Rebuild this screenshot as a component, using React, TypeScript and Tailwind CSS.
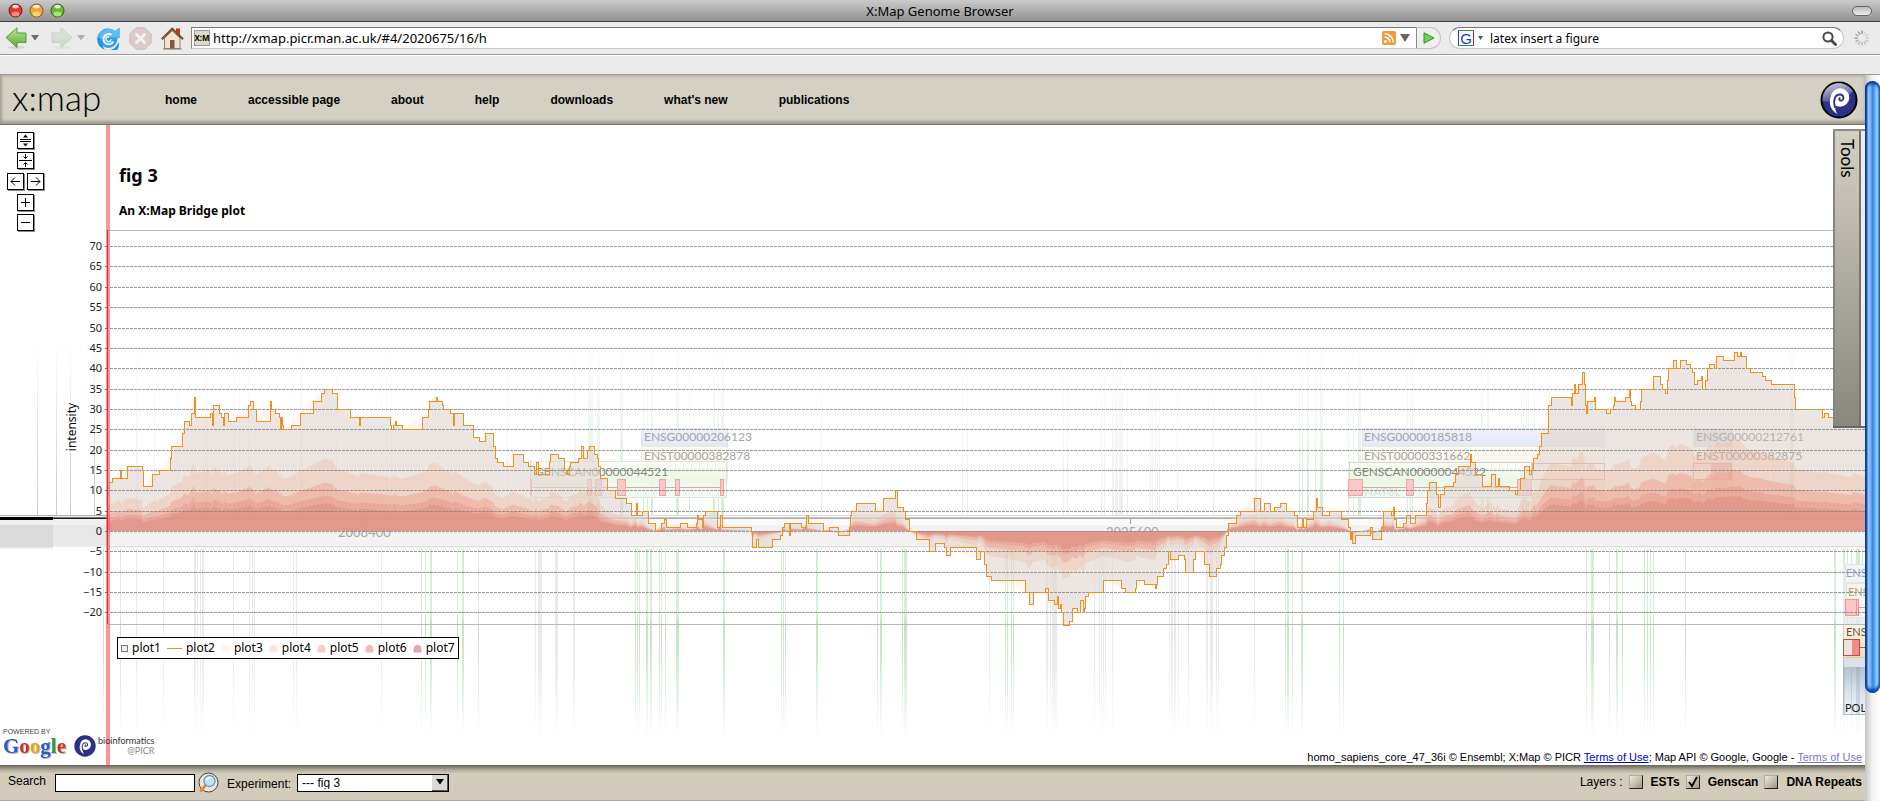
import React from "react";

/* ---------- plot data ---------- */

const ZERO = 531;
const UNIT = 4.07;
const yOf = (v: number) => Math.round((ZERO - v * UNIT) * 10) / 10;
const rowOf = (v: number) => Math.round(ZERO - v * UNIT) + 0.5;

const raw = `108:12,112:13,120:15,121:13,127:16,142:15,143:11,152:14,159:15,170:18,171:21,182:24,184:27,189:26,191:29,194:33,195:28,210:29,212:26,213:31,219:29,221:28,223:26,224:29,228:27,236:28,248:31,250:32,253:30,256:27,270:32,271:30,275:29,279:28,280:25,281:28,282:26,283:25,291:26,300:29,313:32,321:34,324:35,332:34,337:30,350:28,359:26,360:28,390:26,391:25,393:26,395:27,396:26,402:25,422:28,428:30,429:32,436:33,437:32,442:31,443:30,450:29,453:26,454:29,463:26,473:23,479:22,485:24,493:21,495:18,497:17,503:16,513:19,523:17,528:16,534:14,536:17,538:14,549:17,550:19,558:18,564:15,566:14,569:16,570:17,578:18,581:21,583:18,587:20,589:21,594:19,597:18,598:16,600:13,607:10,615:8,626:7,631:4,636:7,637:4,642:5,648:2,655:0,661:2,664:3,666:1,680:2,687:1,696:2,697:4,698:3,702:1,703:4,705:5,717:1,720:4,722:1,751:0,752:-4,756:-2,758:-4,772:-2,780:-1,782:1,784:2,789:-1,790:2,801:1,806:4,808:2,823:0,829:1,838:-1,849:1,850:4,851:5,856:7,875:5,883:8,895:10,897:6,903:5,905:3,909:0,916:-2,929:-5,935:-3,944:-4,946:-6,950:-4,976:-7,980:-5,984:-8,986:-11,991:-12,1025:-15,1029:-18,1033:-15,1045:-14,1048:-17,1054:-18,1057:-16,1058:-19,1060:-18,1061:-20,1063:-23,1069:-22,1072:-19,1077:-20,1080:-17,1083:-20,1084:-19,1085:-16,1088:-15,1103:-12,1121:-14,1125:-15,1135:-14,1136:-12,1144:-13,1155:-14,1156:-13,1157:-11,1163:-9,1166:-8,1168:-5,1170:-7,1178:-6,1184:-7,1185:-10,1193:-7,1195:-5,1204:-8,1209:-11,1216:-9,1220:-8,1221:-6,1224:-4,1226:-1,1228:2,1236:4,1240:5,1254:8,1260:5,1264:7,1270:5,1274:6,1280:7,1286:5,1294:4,1297:1,1302:3,1303:1,1306:3,1313:5,1316:8,1317:6,1322:4,1329:5,1341:3,1348:1,1350:-2,1351:0,1352:-3,1355:-1,1370:1,1372:-2,1381:1,1383:5,1391:4,1393:6,1394:3,1396:1,1403:2,1406:4,1410:2,1415:4,1426:7,1427:10,1429:12,1436:9,1438:6,1440:9,1444:11,1453:12,1455:14,1458:16,1470:19,1471:17,1475:14,1482:11,1491:14,1495:11,1498:13,1499:11,1509:10,1515:9,1517:10,1520:13,1524:16,1529:14,1531:15,1533:18,1537:19,1539:21,1541:24,1548:31,1551:33,1571:31,1572:34,1574:36,1575:34,1578:36,1582:39,1584:36,1585:31,1586:29,1587:32,1594:33,1595:30,1606:29,1610:30,1613:31,1614:33,1615:32,1625:33,1629:35,1630:32,1631:31,1635:30,1640:32,1641:35,1653:38,1660:36,1662:35,1665:34,1667:37,1668:40,1673:42,1676:40,1680:42,1686:41,1690:40,1692:39,1694:36,1697:37,1701:38,1702:35,1705:37,1707:40,1709:41,1714:40,1716:43,1723:42,1734:44,1737:43,1740:44,1741:43,1746:40,1750:39,1762:38,1765:37,1771:36,1794:33,1795:30,1822:28,1824:29,1828:28,1852:26,1853:28,1865:26`;

const steps = raw.split(",").map((p) => p.split(":").map(Number) as [number, number]);

const stepLine = steps
  .map(([x, v], i) => (i === 0 ? `M${x + 0.5} ${rowOf(v)}` : `H${x + 0.5}V${rowOf(v)}`))
  .join("");
const stepArea = `${stepLine}V${ZERO}H108Z`;
const smoothArea = (k: number) =>
  `M108 ${ZERO}` + steps.map(([x, v]) => `L${x} ${yOf(v * k)}`).join("") + `V${ZERO}Z`;

const areas = [
  { k: 1, fill: "rgb(255 215 200 / 0.25)" },
  { k: 0.51, fill: "rgb(235 180 150 / 0.32)" },
  { k: 0.34, fill: "rgb(242 155 140 / 0.45)" },
  { k: 0.25, fill: "rgb(228 145 128 / 0.4)" },
  { k: 0.195, fill: "rgb(214 130 120 / 0.4)" },
];

const ticks = Array.from({ length: 19 }, (_, i) => 70 - i * 5);

/* [x, width] of the probe stripes */
type Stripe = [number, number];
const greenLow: Stripe[] = [[103,1],[120,1],[421,1],[425,1],[430,2],[457,1],[462,2],[478,1],[635,1],[637,1],[639,1],[646,2],[650,2],[659,1],[661,1],[665,1],[676,3],[723,2],[781,1],[783,1],[785,1],[816,2],[877,1],[880,2],[902,1],[904,3],[1005,1],[1007,1],[1011,1],[1013,1],[1285,1],[1287,2],[1292,1],[1301,2],[1339,1],[1343,1],[1586,1],[1591,3],[1609,1],[1616,2],[1622,1],[1644,1],[1647,1],[1650,1],[1653,1],[1685,1],[1834,2],[1843,2],[1847,1],[1851,1],[1856,4],[1862,1]];
const grayLow: Stripe[] = [[136,1],[163,1],[194,2],[197,1],[200,1],[202,2],[233,1],[249,1],[252,1],[254,1],[293,1],[296,1],[381,1],[535,1],[538,4],[555,3],[573,2],[989,1],[1046,2],[1050,1],[1052,5],[1094,1],[1099,1],[1101,1],[1103,1],[1105,1],[1112,1],[1169,1],[1171,2],[1174,2],[1178,1],[1188,1],[1206,2],[1210,3],[1216,1],[1218,1],[1254,1]];
const greenHigh: Stripe[] = [[588,5],[597,3],[620,3],[643,1],[647,1],[651,2],[676,3],[689,1],[713,2],[718,1],[721,3],[1299,1],[1302,1],[1307,2],[1315,1],[1320,3],[1348,1],[1353,1],[1358,3],[1407,1],[1410,1],[1412,1],[1481,2],[1487,2],[1521,1],[1523,1],[1526,1],[1528,1],[1534,1],[1773,1],[1790,4]];
const grayHigh: Stripe[] = [[136,2],[154,1],[177,1],[204,2],[207,1],[233,2],[239,1],[248,2],[254,1],[293,1],[300,3],[336,1],[381,1],[386,1],[391,1],[507,1],[541,1],[574,2],[821,1],[962,1],[967,1],[1063,1],[1067,1],[1101,1],[1104,1],[1112,2],[1115,3],[1119,4],[1127,1],[1150,1],[1152,1],[1155,1],[1157,1],[1159,1],[1177,1],[1213,1],[1255,2],[1261,1],[1549,1],[1722,1]];

function Stripes({ list, y, h, fill }: { list: Stripe[]; y: number; h: number; fill: string }) {
  return (
    <g fill={fill}>
      {list.map(([x, w]) => (
        <rect key={x} x={x} y={y} width={w} height={h} />
      ))}
    </g>
  );
}

function Exons({ list, y }: { list: Stripe[]; y: number }) {
  return (
    <g fill="#fac8c8" stroke="#e9a8a8">
      {list.map(([x, w]) => (
        <rect key={x} x={x + 0.5} y={y + 0.5} width={w} height={16} />
      ))}
    </g>
  );
}

function GenomePlot() {
  return (
    <svg className="absolute inset-0 h-full w-full" role="img" aria-label="Bridge plot of intensity">
      <defs>
        <linearGradient id="gLow" x1="0" y1="548" x2="0" y2="737" gradientUnits="userSpaceOnUse">
          <stop offset="0" stopColor="#b5deb5" stopOpacity=".6" />
          <stop offset=".35" stopColor="#b5deb5" stopOpacity=".5" />
          <stop offset=".4" stopColor="#a8d8a8" stopOpacity=".7" />
          <stop offset=".62" stopColor="#b5deb5" stopOpacity=".6" />
          <stop offset="1" stopColor="#b5deb5" stopOpacity="0" />
        </linearGradient>
        <linearGradient id="sLow" x1="0" y1="548" x2="0" y2="737" gradientUnits="userSpaceOnUse">
          <stop offset="0" stopColor="#d4d4d4" stopOpacity=".45" />
          <stop offset=".4" stopColor="#cfcfcf" stopOpacity=".45" />
          <stop offset=".62" stopColor="#cfcfcf" stopOpacity=".4" />
          <stop offset="1" stopColor="#d4d4d4" stopOpacity="0" />
        </linearGradient>
        <linearGradient id="gHigh" x1="0" y1="340" x2="0" y2="515" gradientUnits="userSpaceOnUse">
          <stop offset="0" stopColor="#b5deb5" stopOpacity="0" />
          <stop offset=".4" stopColor="#b5deb5" stopOpacity=".18" />
          <stop offset="1" stopColor="#b5deb5" stopOpacity=".6" />
        </linearGradient>
        <linearGradient id="sHigh" x1="0" y1="340" x2="0" y2="515" gradientUnits="userSpaceOnUse">
          <stop offset="0" stopColor="#cccccc" stopOpacity="0" />
          <stop offset=".4" stopColor="#cccccc" stopOpacity=".12" />
          <stop offset="1" stopColor="#cccccc" stopOpacity=".35" />
        </linearGradient>
        <linearGradient id="sEdge" x1="0" y1="340" x2="0" y2="515" gradientUnits="userSpaceOnUse">
          <stop offset="0" stopColor="#bbb" stopOpacity="0" />
          <stop offset="1" stopColor="#bbb" stopOpacity=".8" />
        </linearGradient>
        <linearGradient id="blueBox" x1="0" y1="0" x2="0" y2="1">
          <stop offset="0" stopColor="#eef0f8" />
          <stop offset="1" stopColor="#e2eaf6" />
        </linearGradient>
        <linearGradient id="beigeBox" x1="0" y1="0" x2="0" y2="1">
          <stop offset="0" stopColor="#fdfbf5" />
          <stop offset="1" stopColor="#f8f0de" />
        </linearGradient>
        <linearGradient id="greenBox" x1="0" y1="0" x2="0" y2="1">
          <stop offset="0" stopColor="#fbfdf7" />
          <stop offset=".5" stopColor="#ecf6e6" />
          <stop offset="1" stopColor="#f3faf3" />
        </linearGradient>
        <linearGradient id="polBox" x1="0" y1="0" x2="0" y2="1">
          <stop offset="0" stopColor="#b5c2cf" />
          <stop offset=".6" stopColor="#dfe6f0" />
          <stop offset="1" stopColor="#f4f6fa" />
        </linearGradient>
        <linearGradient id="geneBox" x1="0" y1="0" x2="0" y2="1">
          <stop offset="0" stopColor="#fbf7e8" />
          <stop offset="1" stopColor="#f0dfac" />
        </linearGradient>
        <linearGradient id="bandEdge" x1="0" y1="0" x2="0" y2="1">
          <stop offset="0" stopColor="#f6f6f6" />
          <stop offset=".35" stopColor="#ececec" />
          <stop offset=".9" stopColor="#dedede" />
          <stop offset="1" stopColor="#fff" />
        </linearGradient>
      </defs>

      <g transform="translate(0 -125)" fontFamily="Lato, sans-serif">
        {/* probe stripes */}
        <Stripes list={grayHigh} y={340} h={175} fill="url(#sHigh)" />
        <Stripes list={greenHigh} y={340} h={175} fill="url(#gHigh)" />
        <Stripes list={[[37, 1], [56, 1], [70, 1], [94, 1]]} y={340} h={175} fill="url(#sEdge)" />
        <Stripes list={grayLow} y={548} h={189} fill="url(#sLow)" />
        <Stripes list={greenLow} y={548} h={189} fill="url(#gLow)" />

        {/* chromosome band */}
        <rect x="108" y="515" width="2400" height="17" fill="#fafafa" />
        <rect x="108" y="525" width="2400" height="21" fill="#f2f2f2" />
        <rect x="108" y="515" width="2400" height="1" fill="#dcdcdc" />
        <rect x="108" y="517" width="2400" height="1" fill="#c8c8c8" />
        <rect x="108" y="518" width="2400" height="1" fill="#a8a8a8" />
        <rect x="108" y="546" width="2400" height="1" fill="#dcdcdc" />
        <rect x="108" y="547" width="2400" height="2" fill="#f6f6f6" />
        <rect x="0" y="515" width="53" height="35" fill="url(#bandEdge)" />
        <rect x="0" y="525" width="53" height="22" fill="#dadada" />
        <rect x="53" y="515" width="55" height="32" fill="#f0f0f0" />
        <rect x="53" y="525" width="55" height="21" fill="#e8e8e8" />
        <rect x="0" y="515" width="108" height="1" fill="#b0b0b0" />
        <rect x="0" y="517" width="53" height="3" fill="#000" />
        <rect x="53" y="517" width="55" height="1" fill="#777" />
        <rect x="53" y="518" width="55" height="1" fill="#222" />
        <path d="M362.5 519v5M1130.5 519v5" stroke="#999" />
        <g fontSize="13" fill="#a6a6a6">
          <text x="338" y="537">2008400</text>
          <text x="1106" y="537">2025600</text>
        </g>

        {/* annotated genes */}
        <g stroke="#dfe2e8">
          <rect x="641.5" y="428.5" width="86" height="18" fill="url(#blueBox)" />
          <rect x="641.5" y="446.5" width="86" height="34" fill="url(#beigeBox)" stroke="#efe8dc" />
          <rect x="722.5" y="463.5" width="4" height="16" fill="#fbeaea" stroke="#e9b8b8" />
          <rect x="530.5" y="461.5" width="196" height="36" fill="url(#greenBox)" fillOpacity=".9" stroke="#dbe6dc" />
          <rect x="1362.5" y="428.5" width="242" height="18" fill="url(#blueBox)" />
          <rect x="1362.5" y="446.5" width="242" height="51" fill="url(#beigeBox)" stroke="#efe8dc" />
          <rect x="1532.5" y="463.5" width="72" height="16" fill="#fff8f5" stroke="#d49a9a" />
          <rect x="1349.5" y="462.5" width="182" height="35" fill="url(#greenBox)" stroke="#cfd8d0" />
          <rect x="1693.5" y="428.5" width="39" height="18" fill="#d8deea" />
          <rect x="1693.5" y="446.5" width="39" height="51" fill="url(#beigeBox)" stroke="#e4dccc" />
          <rect x="1693.5" y="463.5" width="38" height="16" fill="#fff4f2" stroke="#d09090" />
          <rect x="1711" y="464" width="20" height="15" fill="#f4a8a2" stroke="none" />
        </g>
        <path d="M530 487.5H723M1349 487.5H1531" stroke="#dfa8a8" />
        <Exons y={479} list={[[530, 1], [587, 4], [595, 6], [617, 8], [659, 6], [675, 4], [720, 3], [1348, 14], [1406, 7], [1517, 14]]} />
        <g fontSize="12" fill="#a4a4a8">
          <text x="644" y="441">ENSG00000206123</text>
          <text x="644" y="460">ENST00000382878</text>
          <text x="535" y="476" fill="#868a84">GENSCAN00000044521</text>
          <text x="1364" y="441">ENSG00000185818</text>
          <text x="1364" y="460">ENST00000331662</text>
          <text x="1353" y="476" fill="#858a82">GENSCAN00000044522</text>
          <text x="1364" y="496" fill="#dcdfda">NAT8L</text>
          <text x="1696" y="441" fill="#707074">ENSG00000212761</text>
          <text x="1696" y="460" fill="#606064">ENST00000382875</text>
        </g>
        <g>
          <rect x="1843" y="564" width="40" height="94" fill="#e3ebf2" fillOpacity=".8" />
          <rect x="1845.5" y="564.5" width="40" height="18" fill="#f1f5fa" stroke="#dde6ef" />
          <rect x="1846.5" y="583.5" width="40" height="34" fill="#f9f4e4" stroke="#e9e2d2" />
          <path d="M1859 607.5h12" stroke="#e09a9a" />
          <rect x="1845.5" y="599.5" width="13" height="16" fill="#fac6c8" stroke="#e59a9c" />
          <path d="M1856.5 599v17" stroke="#e59a9c" />
          <rect x="1843.5" y="624.5" width="40" height="33" fill="url(#geneBox)" stroke="#d8cda8" />
          <path d="M1860 647.5h12" stroke="#b85050" />
          <rect x="1843.5" y="639.5" width="16" height="16" fill="#ece4dc" stroke="#b85050" />
          <rect x="1852" y="640" width="7" height="15" fill="#f78a86" />
          <rect x="1843" y="658" width="40" height="9" fill="#dbe2ec" />
          <rect x="1843" y="667" width="40" height="48" fill="url(#polBox)" />
          <Stripes list={[[1843, 2], [1851, 1], [1856, 4]]} y={667} h={48} fill="rgb(120 150 150 / 0.25)" />
          <path d="M1843.5 658V714.5H1880" fill="none" stroke="#b4bcc4" />
          <g fontSize="11">
            <text x="1846" y="577" fill="#a0a4aa">ENS</text>
            <text x="1848" y="596" fill="#a8a49a">ENS</text>
            <text x="1846" y="636" fill="#5a564c">ENS</text>
            <text x="1845" y="712" fill="#222">POL</text>
          </g>
        </g>

        {/* intensity plot */}
        <path d={stepArea} fill="rgb(208 214 216 / 0.5)" shapeRendering="crispEdges" />
        {areas.map((a) => (
          <path key={a.k} d={smoothArea(a.k)} fill={a.fill} />
        ))}
        <g stroke="#808080" strokeOpacity=".8" strokeDasharray="3 1">
          {ticks.map((v) => (
            <path key={v} d={`M110 ${rowOf(v)}H2400`} />
          ))}
        </g>
        <path d="M108 230.5H2400M108 624.5H2400" stroke="#b8b8b8" />
        <path d={stepLine} fill="none" stroke="#f0911e" shapeRendering="crispEdges" />
        <g stroke="#666">
          {ticks.map((v) => (
            <path key={v} d={`M105 ${rowOf(v)}h3`} />
          ))}
        </g>
        <g fontFamily="'Noto Sans', sans-serif" fontSize="11" textAnchor="end" fill="#222">
          {ticks.map((v) => (
            <text key={v} x="102" y={rowOf(v) + 3.5}>
              {v < 0 ? `−${-v}` : v}
            </text>
          ))}
        </g>
        <text
          transform="translate(76 427) rotate(-90)"
          textAnchor="middle"
          fontFamily="'Noto Sans', sans-serif"
          fontSize="12"
          fill="#111"
        >
          intensity
        </text>
        <rect x="106" y="125" width="4" height="900" fill="#ff5050" fillOpacity=".62" />
        <rect x="107" y="230" width="1" height="394" fill="#b02020" fillOpacity=".75" />
      </g>
    </svg>
  );
}

/* ---------- small drawings ---------- */

function Swirl({ size, gloss }: { size: number; gloss?: boolean }) {
  return (
    <svg width={size} height={size} viewBox="-19 -19 38 38" aria-hidden="true">
      <defs>
        <linearGradient id="swirlGloss" x1="0" y1="0" x2=".4" y2="1">
          <stop offset="0" stopColor="#fff" stopOpacity=".8" />
          <stop offset="1" stopColor="#fff" stopOpacity=".15" />
        </linearGradient>
      </defs>
      <circle r={gloss ? 17.5 : 18.5} fill="#2b3285" stroke={gloss ? "#000" : "none"} strokeWidth="2" />
      {gloss && <path d="M-16.500 1A16.500 16.500 0 0 1 14 -9C8 -1 -4 3 -16.500 1Z" fill="url(#swirlGloss)" />}
      <circle cx="1" cy="-2.500" r="9.300" fill="#fff" />
      <path d="M-8.300 -3C-11 4 -7.500 11 -1.500 14C-5 9 -4 5 -2 3Z" fill="#fff" />
      <path d="M-4.200 7C-6 0 -4 -5.500 1 -5.500C5 -5.500 5.500 0 2.500 .5C.5 1 -.5 -1 .8 -2" fill="none" stroke="#2b3285" strokeWidth="1.800" strokeLinecap="round" />
    </svg>
  );
}

function Light({ color, edge, glow }: { color: string; edge: string; glow: string }) {
  return (
    <svg width="15" height="15" viewBox="0 0 15 15" aria-hidden="true">
      <circle cx="7.500" cy="7.500" r="6.500" fill={color} stroke={edge} />
      <ellipse cx="7.500" cy="11" rx="4" ry="2.500" fill={glow} fillOpacity=".8" />
      <ellipse cx="7.500" cy="3.600" rx="3.200" ry="1.800" fill="#fff" fillOpacity=".85" />
    </svg>
  );
}

function Caret({ className }: { className: string }) {
  return (
    <svg width="8" height="6" viewBox="0 0 8 6" className={className} aria-hidden="true">
      <path d="M0 0h8L4 5.500Z" fill="currentColor" />
    </svg>
  );
}

function Arrow({ flip }: { flip?: boolean }) {
  return (
    <svg width="22" height="22" viewBox="0 0 22 22" className={flip ? "-scale-x-100 opacity-40" : ""} aria-hidden="true">
      <defs>
        <linearGradient id={flip ? "arrowF" : "arrowB"} x1="0" y1="0" x2="0" y2="1">
          <stop offset="0" stopColor={flip ? "#c4dcc0" : "#c3e89a"} />
          <stop offset="1" stopColor={flip ? "#a4bca0" : "#57a834"} />
        </linearGradient>
      </defs>
      <ellipse cx="11" cy="20.500" rx="9" ry="1.500" fill="#000" fillOpacity=".1" />
      <path d="M1 10.500L12 .8V6h9v9.500h-9v5Z" fill={`url(#${flip ? "arrowF" : "arrowB"})`} stroke={flip ? "#8ca68a" : "#559b3c"} strokeLinejoin="round" />
    </svg>
  );
}

function Reload() {
  return (
    <svg width="23" height="23" viewBox="0 0 23 23" aria-hidden="true">
      <path d="M18.200 4.200L22.500 .8V11H18.500A8 8 0 1 0 21.500 15A10.800 10.800 0 1 1 18.200 4.200Z" fill="#1f8fe0" />
      <circle cx="11.500" cy="12" r="9" fill="#2f9fe8" />
      <path d="M1 10A10.800 10.800 0 0 1 18 4L22.500 .8V10.500H12C8 12 4 12 1 10Z" fill="#5cbcf4" />
      <path d="M16.300 14.500A5.200 5.200 0 1 1 14.500 7.800" fill="none" stroke="#fff" strokeWidth="1.900" />
      <path d="M14.200 12.300A2.600 2.600 0 1 1 12 9.600" fill="none" stroke="#e4f4ff" strokeWidth="1.400" />
    </svg>
  );
}

function Stop() {
  return (
    <svg width="23" height="23" viewBox="0 0 23 23" aria-hidden="true">
      <path d="M7 .8h9L22.200 7v9L16 22.200H7L.8 16V7Z" fill="#dccaca" stroke="#cdbaba" />
      <path d="M7.500 7.500l8 8M15.500 7.500l-8 8" stroke="#f7f0f0" strokeWidth="3" strokeLinecap="round" />
    </svg>
  );
}

function House() {
  return (
    <svg width="23" height="23" viewBox="0 0 23 23" aria-hidden="true">
      <path d="M15 1.500h4V8h-4Z" fill="#c23a1c" />
      <path d="M3.500 11L11 4l8 7v10.500H3.500Z" fill="#f4e3cf" stroke="#a08468" />
      <path d="M.8 12.200L11.200 1.800 22 12.200" fill="none" stroke="#7c4a36" strokeWidth="2.200" />
      <path d="M9 13h4.500v8.500H9Z" fill="#7c5a48" />
      <path d="M2 22h19" stroke="#8a7a6a" />
    </svg>
  );
}

function Throbber() {
  return (
    <svg width="16" height="16" viewBox="-8 -8 16 16" stroke="#8a8a8a" strokeWidth="1.300" aria-hidden="true">
      {Array.from({ length: 12 }, (_, i) => (
        <path key={i} d="M0 -4V-7.500" transform={`rotate(${i * 30})`} strokeOpacity={i === 0 ? 1 : 0.15 + i * 0.07} />
      ))}
    </svg>
  );
}

const mapIcons: Record<string, React.ReactNode> = {
  "Stretch tracks": (
    <>
      <path d="M3 7.500h11M3 9.500h11" />
      <path d="M8.500 2.500L11 5.500H6ZM8.500 14.500L11 11.500H6Z" fill="#000" stroke="none" />
    </>
  ),
  "Squash tracks": <path d="M2 8.500h13M8.500 2v4M6.500 4.500l2 2 2-2M8.500 15v-4M6.500 12.500l2-2 2 2" />,
  "Pan left": <path d="M4 8.500h9M8 4.500l-4 4 4 4" />,
  "Pan right": <path d="M4 8.500h9M9 4.500l4 4-4 4" />,
  "Zoom in": <path d="M4 8.500h9M8.500 4v9" />,
  "Zoom out": <path d="M4 8.500h9" />,
};

function MapButton({ name }: { name: string }) {
  return (
    <button aria-label={name} className="size-[17px] border border-black bg-white shadow-[1px_1px_0_#888]">
      <svg width="17" height="17" viewBox="0 0 17 17" fill="none" stroke="#000" className="-m-px">
        {mapIcons[name]}
      </svg>
    </button>
  );
}

/* ---------- page parts ---------- */

function TitleBar() {
  return (
    <div className="relative flex h-[22px] items-center justify-between border-b border-[#3f3f3f] bg-linear-to-b from-[#cacaca] to-[#929292] px-2">
      <div className="flex gap-1.5">
        <Light color="#e5332e" edge="#7d1512" glow="#ff9c96" />
        <Light color="#f0a53a" edge="#8f5312" glow="#ffe07a" />
        <Light color="#6cb83a" edge="#2f6413" glow="#b8f07a" />
      </div>
      <h1 className="absolute inset-x-0 text-center font-['Noto_Sans',sans-serif] text-[13px] leading-5 text-black">
        X:Map Genome Browser
      </h1>
      <button aria-label="Toggle toolbar" className="h-2.5 w-5 rounded-full border border-[#666] bg-linear-to-b from-[#bbb] to-[#eee]" />
    </div>
  );
}

function Toolbar() {
  return (
    <div className="flex h-[33px] items-center border-b border-[#9c9c9c] bg-[#ebebeb] pr-2.5 pl-[5px] font-['Noto_Sans',sans-serif] text-[13px]">
      <button aria-label="Back" className="flex items-center gap-1">
        <Arrow />
        <Caret className="text-[#6a6a6a]" />
      </button>
      <button aria-label="Forward" className="ml-3 flex items-center gap-1">
        <Arrow flip />
        <Caret className="text-[#b0b0b0]" />
      </button>
      <div className="ml-3 flex gap-[9px]">
        <button aria-label="Reload"><Reload /></button>
        <button aria-label="Stop"><Stop /></button>
        <button aria-label="Home"><House /></button>
      </div>
      <div className="ml-[7px] flex h-[22px] flex-1 items-center border border-r-0 border-[#c8c8c8] border-t-[#777] border-l-[#8a8a8a] bg-white pl-0.5">
        <span className="flex h-4 w-4 items-center justify-center border border-[#999] bg-[#dcdcc4] text-[8px] leading-none font-bold">
          X:M
        </span>
        <input
          aria-label="Address"
          defaultValue="http://xmap.picr.man.ac.uk/#4/2020675/16/h"
          className="ml-0.5 min-w-0 flex-1 bg-transparent px-px pt-px outline-none"
        />
        <svg width="14" height="14" viewBox="0 0 14 14" aria-hidden="true">
          <rect width="14" height="14" rx="2" fill="#f39a3c" />
          <circle cx="3.500" cy="10.500" r="1.400" fill="#fff" />
          <path d="M2.500 6a5.500 5.500 0 0 1 5.500 5.500M2.500 2.800a8.700 8.700 0 0 1 8.700 8.700" stroke="#fff" strokeWidth="1.500" fill="none" />
        </svg>
        <svg width="10" height="8" className="mr-1.5 ml-1" aria-hidden="true"><path d="M0 0h10L5 8Z" fill="#666" /></svg>
      </div>
      <button aria-label="Go" className="flex h-[22px] w-[25px] items-center justify-center rounded-r-full border border-[#c4c4c4] border-l-[#8a8a8a] bg-[#efefef]">
        <svg width="12" height="12" viewBox="0 0 12 12" aria-hidden="true">
          <path d="M1 .8L11 6 1 11.200Z" fill="#6fd05a" stroke="#2a9a22" />
        </svg>
      </button>
      <div className="ml-2 flex h-[22px] w-[395px] items-center rounded-full border border-[#c8c8c8] border-t-[#777] bg-white pr-1.5 pl-2">
        <span className="flex size-4 items-center justify-center border border-t-[#2a9a2a] border-r-[#c02020] border-b-[#2a9a2a] border-l-[#2040c0] font-['Liberation_Sans',sans-serif] text-[15px] leading-none text-[#1a3ac0]">
          G
        </span>
        <svg width="5" height="4" className="ml-1" aria-hidden="true"><path d="M0 0h5L2.500 4Z" fill="#555" /></svg>
        <input
          aria-label="Web search"
          defaultValue="latex insert a figure"
          className="ml-1.5 min-w-0 flex-1 bg-transparent px-px pt-px text-[12px] outline-none"
        />
        <svg width="15" height="15" viewBox="0 0 15 15" fill="none" stroke="#4a4a4a" aria-hidden="true">
          <circle cx="6" cy="6" r="4.600" strokeWidth="2" />
          <path d="M9.500 9.500l4 4" strokeWidth="3" strokeLinecap="round" />
        </svg>
      </div>
      <span className="ml-2.5"><Throbber /></span>
    </div>
  );
}

function SiteHeader() {
  const links = ["home", "accessible page", "about", "help", "downloads", "what's new", "publications"];
  return (
    <header className="flex h-[50px] items-center border-b border-[#77746a] bg-[#d4d0c4] pr-[7px] pl-3 shadow-[inset_0_-3px_3px_#a09c90,inset_2px_1px_3px_#aaa69a]">
      <a href="#home" className="w-[153px] pb-1 font-['Lato',sans-serif] text-[35px] leading-none font-light text-black">
        x:map
      </a>
      <nav className="flex flex-1 gap-[51px] text-[12px] font-bold">
        {links.map((l) => (
          <a key={l} href={`#${l}`}>{l}</a>
        ))}
      </nav>
      <Swirl size={38} gloss />
    </header>
  );
}

function Legend() {
  const fills = ["#fef3f0", "#fde3da", "#fccbc4", "#f5b8b8", "#e0a9ae"];
  return (
    <ul className="absolute top-[512px] left-[117px] flex h-[22px] items-center gap-1.5 border border-black bg-white px-[3px] font-['Noto_Sans',sans-serif] text-[12px]">
      <li className="flex items-center gap-1">
        <span className="size-[7px] border border-[#777] bg-[#eee]" />
        plot1
      </li>
      <li className="flex items-center gap-1">
        <span className="h-px w-[15px] bg-[#f0911e]" />
        plot2
      </li>
      {fills.map((f, i) => (
        <li key={f} className="flex items-center gap-1">
          <svg width="9" height="9" aria-hidden="true">
            <path d="M.5 8.500V5Q1.500 .8 4.500 .8T8.500 5V8.500Z" fill={f} />
          </svg>
          plot{i + 3}
        </li>
      ))}
    </ul>
  );
}

function Credits() {
  const google: [string, string][] = [["G", "text-[#2a5bd0]"], ["o", "text-[#cf3322]"], ["o", "text-[#e0a91a]"], ["g", "text-[#2a5bd0]"], ["l", "text-[#2f9e3a]"], ["e", "text-[#cf3322]"]];
  return (
    <div className="absolute inset-x-0 bottom-0 flex items-end justify-between pr-[3px] pl-[3px]">
      <div className="flex items-center gap-2 pb-2">
        <a href="#google" className="flex flex-col">
          <span className="text-[7px] leading-[8px] text-[#444]">POWERED BY</span>
          <span className="font-['Liberation_Serif',serif] text-[21px] leading-[21px] font-bold drop-shadow-[1px_1px_0_#bbb]">
            {google.map(([c, k], i) => (
              <span key={i} className={k}>{c}</span>
            ))}
          </span>
        </a>
        <a href="#picr" className="flex items-center gap-0.5 pt-2 font-['Lato',sans-serif] text-[9px] leading-[10px]">
          <Swirl size={22} />
          <span className="text-right text-[#333]">
            bioinformatics
            <br />
            <span className="text-[#888]">@PICR</span>
          </span>
        </a>
      </div>
      <p className="text-[11px] leading-4">
        homo_sapiens_core_47_36i © Ensembl; X:Map © PICR{" "}
        <a href="#terms" className="text-[#0000e0] underline">Terms of Use</a>; Map API © Google, Google -{" "}
        <a href="#google-terms" className="text-[#7777cc] underline">Terms of Use</a>
      </p>
    </div>
  );
}

function ToolsTab() {
  return (
    <div className="absolute top-1 right-0 flex h-[299px] border-t-2 border-b-2 border-t-[#8c8c8c] border-b-[#666]">
      <button className="flex w-7 items-start justify-center border-r-2 border-l-2 border-r-[#77746c] border-l-[#848484] bg-linear-to-b from-[#d4d0c4] to-[#8a877d] pt-2 font-['Lato',sans-serif] text-[17px] leading-none">
        <span className="[writing-mode:vertical-rl]">Tools</span>
      </button>
      <span className="w-1 bg-[#f0ede8]" />
    </div>
  );
}

function GenomeMap() {
  return (
    <main className="relative min-h-[640px] flex-1 overflow-hidden bg-white">
      <GenomePlot />
      <div className="relative flex">
        <div className="flex w-[119px] flex-col items-start pt-[7px] pl-[7px]">
          <div className="flex w-[37px] flex-col items-center gap-[3px]">
            <MapButton name="Stretch tracks" />
            <MapButton name="Squash tracks" />
            <div className="flex gap-[3px] py-px">
              <MapButton name="Pan left" />
              <MapButton name="Pan right" />
            </div>
            <MapButton name="Zoom in" />
            <MapButton name="Zoom out" />
          </div>
        </div>
        <div className="pt-[38px] font-['Noto_Sans',sans-serif] font-bold text-black">
          <h2 className="text-[18px] leading-6">fig 3</h2>
          <p className="mt-4 text-[12px] leading-4">An X:Map Bridge plot</p>
        </div>
      </div>
      <Legend />
      <ToolsTab />
      <Credits />
    </main>
  );
}

function Layer({ label, checked }: { label: string; checked?: boolean }) {
  return (
    <label className="flex items-center gap-2 font-bold">
      <span className="relative flex">
        <input
          type="checkbox"
          defaultChecked={checked}
          className="peer size-3.5 appearance-none border border-t-[#aaa] border-r-[#222] border-b-[#222] border-l-[#aaa] bg-linear-to-br from-[#f0ebe0] to-[#a09680]"
        />
        <svg width="14" height="14" viewBox="0 0 14 14" className="pointer-events-none absolute inset-0 hidden peer-checked:block" aria-hidden="true">
          <path d="M3 7l3 4 5-9" fill="none" stroke="#000" strokeWidth="1.800" />
        </svg>
      </span>
      {label}
    </label>
  );
}

function SearchBar() {
  return (
    <footer className="flex h-9 items-center justify-between border-b border-[#aaa] bg-[#d3ccbb] bg-linear-to-b from-[#66635a] from-0% via-[#b5b0a0] via-15% to-[#d3ccbb] to-25% pr-[3px] pl-2 text-[12px]">
      <div className="flex items-center">
        <label htmlFor="search" className="mr-[9px] pb-1">Search</label>
        <input id="search" className="h-[18px] w-[140px] border border-black bg-white px-1 outline-none" />
        <button aria-label="Run search" className="ml-[3px]">
          <svg width="21" height="21" viewBox="0 0 21 21" aria-hidden="true">
            <circle cx="10.500" cy="10.500" r="9.500" fill="#ece8dc" stroke="#444" />
            <path d="M7.500 13.500L3 18.500" stroke="#e08a3a" strokeWidth="3" strokeLinecap="round" />
            <circle cx="11.500" cy="9" r="5.500" fill="#bfe3fa" stroke="#6f93b4" strokeWidth="1.300" />
            <path d="M8.500 8a3.500 3.500 0 0 1 4-2.500" stroke="#fff" strokeWidth="1.500" fill="none" />
          </svg>
        </button>
        <label htmlFor="experiment" className="mr-1.5 ml-2 pt-0.5">Experiment:</label>
        <span className="relative flex">
          <select id="experiment" className="h-[18px] w-[152px] appearance-none border border-black bg-white pl-1 text-[12px] leading-none outline-none">
            <option>--- fig 3</option>
          </select>
          <span className="pointer-events-none absolute inset-y-px right-px flex w-4 items-center justify-center border-r border-b border-[#555] bg-[#dcdad2]">
            <Caret className="text-black" />
          </span>
        </span>
      </div>
      <div className="flex items-center gap-1.5 pb-0.5">
        <span>Layers :</span>
        <Layer label="ESTs" />
        <Layer label="Genscan" checked />
        <Layer label="DNA Repeats" />
      </div>
    </footer>
  );
}

function Scrollbar() {
  return (
    <div className="flex w-[15px] flex-col bg-linear-to-r from-[#c4c4c4] via-[#f4f4f4] to-[#fff] pt-1.5">
      <div className="h-[85%] rounded-full bg-[linear-gradient(90deg,#0a3fae_0%,#0a3fae_8%,#9cc8f4_22%,#6fb0f2_38%,#2f84ea_52%,#9ad8ff_82%,#4a7fb8_100%)] shadow-[inset_0_-4px_3px_#0b46b8,inset_0_3px_3px_#0b3a9a]" />
    </div>
  );
}

export default function App() {
  return (
    <div className="flex min-h-screen flex-col bg-white font-['Liberation_Sans',Arial,sans-serif] text-black">
      <TitleBar />
      <Toolbar />
      <div className="h-5 border-t border-b border-t-white border-b-[#9a9a9a] bg-[#ebebeb]" />
      <div className="flex flex-1">
        <div className="flex min-w-0 flex-1 flex-col">
          <SiteHeader />
          <GenomeMap />
          <SearchBar />
        </div>
        <Scrollbar />
      </div>
    </div>
  );
}
